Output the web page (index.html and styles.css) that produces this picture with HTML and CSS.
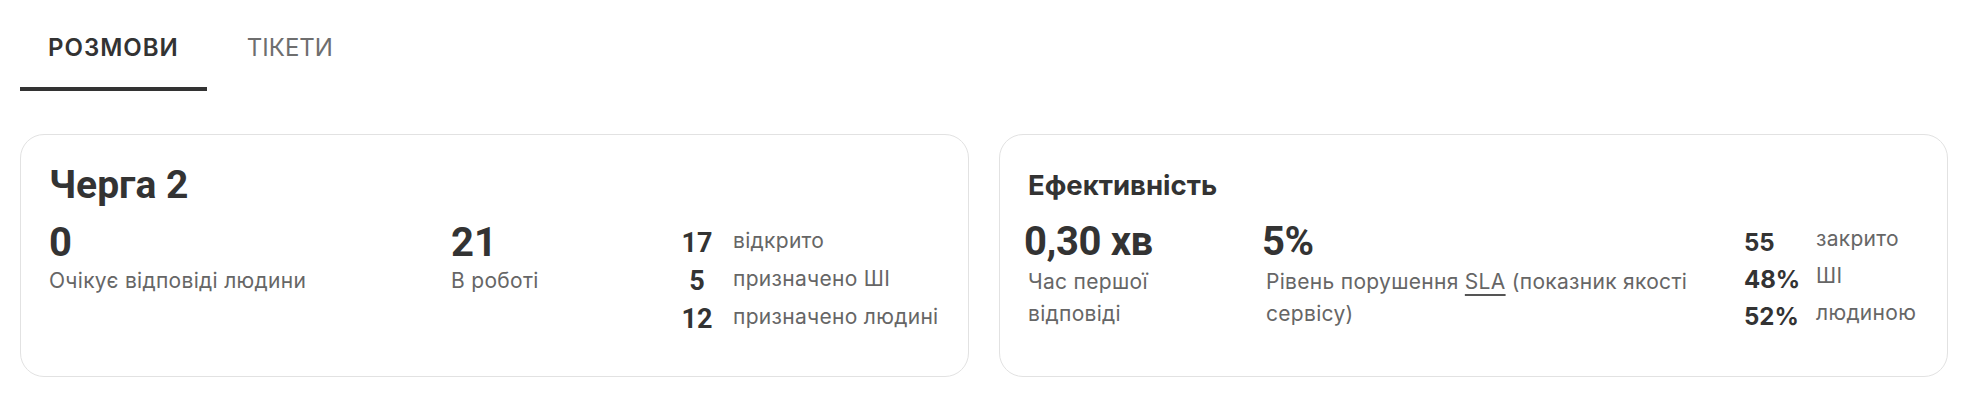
FILE: index.html
```html
<!DOCTYPE html>
<html lang="uk">
<head>
<meta charset="utf-8">
<title>Черга 2</title>
<link rel="stylesheet" href="styles.css">
</head>
<body>
<nav class="tabs">
  <div class="tab tab-active">РОЗМОВИ</div>
  <div class="tab">ТІКЕТИ</div>
</nav>
<main class="cards">
  <section class="card card-queue">
    <h2 class="q-title">Черга 2</h2>
    <div class="q-grid">
      <div class="q-col">
        <div class="value">0</div>
        <div class="label">Очікує відповіді людини</div>
      </div>
      <div class="q-col">
        <div class="value">21</div>
        <div class="label">В роботі</div>
      </div>
      <div class="q-list">
        <div class="q-row"><span class="q-num">17</span><span class="q-text">відкрито</span></div>
        <div class="q-row"><span class="q-num">5</span><span class="q-text">призначено ШІ</span></div>
        <div class="q-row"><span class="q-num">12</span><span class="q-text">призначено людині</span></div>
      </div>
    </div>
  </section>
  <section class="card card-eff">
    <h2 class="e-title">Ефективність</h2>
    <div class="e-grid">
      <div class="e-col">
        <div class="value e-value">0,30 хв</div>
        <div class="label e-label">Час першої відповіді</div>
      </div>
      <div class="e-col">
        <div class="value e-value">5%</div>
        <div class="label e-label">Рівень порушення <span class="abbr">SLA</span> (показник якості сервісу)</div>
      </div>
      <div class="e-list">
        <div class="e-row"><span class="e-num">55</span><span class="e-text">закрито</span></div>
        <div class="e-row"><span class="e-num">48%</span><span class="e-text">ШІ</span></div>
        <div class="e-row"><span class="e-num">52%</span><span class="e-text">людиною</span></div>
      </div>
    </div>
  </section>
</main>
</body>
</html>
```
FILE: styles.css
```css
* { box-sizing: border-box; }
html, body { margin: 0; padding: 0; background: #ffffff; }
body { font-family: Inter, "Noto Sans", sans-serif; color: #333333; }

.tabs {
  display: flex;
  gap: 12px;
  padding: 0 20px;
}
.tab {
  padding: 33px 28px 24px;
  font-family: Inter, sans-serif;
  font-size: 24px;
  line-height: 30px;
  letter-spacing: 0;
  color: #6e6e6e;
  font-weight: 400;
  border-bottom: 4px solid transparent;
}
.tab-active {
  color: #333333;
  font-weight: 600;
  letter-spacing: 1px;
  border-bottom-color: #333333;
}

.cards {
  display: grid;
  grid-template-columns: 1fr 1fr;
  gap: 30px;
  padding: 0 18px 0 20px;
  margin-top: 43px;
}
.card {
  border: 1px solid #e2e2e2;
  border-radius: 24px;
  padding: 28px 28px 38px;
  background: #ffffff;
}

/* shared value / label styles */
.value {
  font-family: Roboto, "Liberation Sans", sans-serif;
  font-size: 40px;
  line-height: 48px;
  font-weight: 700;
  color: #333333;
}
.label {
  font-family: Inter, "Noto Sans", sans-serif;
  font-size: 21px;
  line-height: 28px;
  letter-spacing: 0.3px;
  color: #666666;
}

/* Queue card */
.q-title {
  margin: 0;
  font-family: Roboto, "Liberation Sans", sans-serif;
  font-size: 39px;
  line-height: 44px;
  font-weight: 700;
  color: #333333;
}
.q-grid {
  display: grid;
  grid-template-columns: 402px 228px 1fr;
  margin-top: 12px;
}
.q-list { padding-top: 5px; }
.q-row {
  display: flex;
  align-items: flex-start;
  gap: 18px;
}
.q-num {
  flex: 0 0 36px;
  text-align: center;
  font-family: Roboto, "Liberation Sans", sans-serif;
  font-size: 27px;
  line-height: 38px;
  font-weight: 700;
  color: #333333;
}
.q-text {
  font-family: Inter, "Noto Sans", sans-serif;
  font-size: 21px;
  line-height: 33px;
  letter-spacing: 0.3px;
  color: #666666;
}

/* Efficiency card */
.e-title {
  margin: 0;
  font-family: Inter, "Noto Sans", sans-serif;
  font-size: 27.5px;
  line-height: 44px;
  font-weight: 700;
  color: #333333;
}
.e-grid {
  display: grid;
  grid-template-columns: 194px 434px 1fr;
  column-gap: 44px;
  margin-top: 10px;
}
.e-value {
  line-height: 49px;
  margin-left: -4px;
  letter-spacing: -0.4px;
}
.e-label { line-height: 32px; }
.abbr {
  text-decoration: underline;
  text-decoration-thickness: 1.5px;
  text-underline-offset: 5px;
  text-decoration-color: #555555;
}
.e-list { padding-top: 7px; }
.e-row {
  display: flex;
  align-items: flex-start;
}
.e-num {
  flex: 0 0 72px;
  font-family: Inter, "Noto Sans", sans-serif;
  font-size: 24px;
  line-height: 37px;
  font-weight: 700;
  color: #333333;
}
.e-text {
  font-family: Inter, "Noto Sans", sans-serif;
  font-size: 21px;
  line-height: 30px;
  letter-spacing: 0.3px;
  color: #666666;
}
```
